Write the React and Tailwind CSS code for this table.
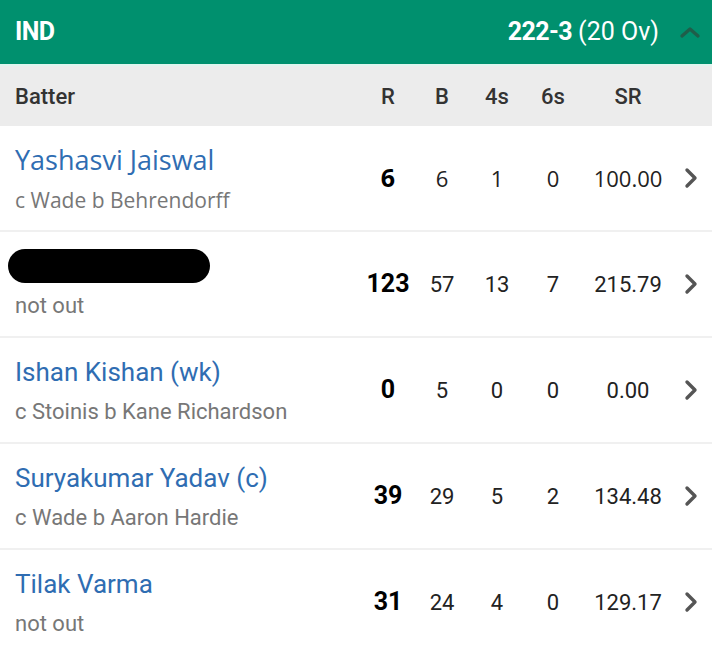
const batters = [
  { name: 'Yashasvi Jaiswal', out: 'c Wade b Behrendorff', r: 6, b: 6, fours: 1, sixes: 0, sr: '100.00', alt: true },
  { name: null, out: 'not out', r: 123, b: 57, fours: 13, sixes: 7, sr: '215.79' },
  { name: 'Ishan Kishan (wk)', out: 'c Stoinis b Kane Richardson', r: 0, b: 5, fours: 0, sixes: 0, sr: '0.00' },
  { name: 'Suryakumar Yadav (c)', out: 'c Wade b Aaron Hardie', r: 39, b: 29, fours: 5, sixes: 2, sr: '134.48' },
  { name: 'Tilak Varma', out: 'not out', r: 31, b: 24, fours: 4, sixes: 0, sr: '129.17' },
]

const Chevron = () => (
  <svg width="16" height="24" viewBox="0 0 16 24" fill="none">
    <path d="M4 4l8 8-8 8" stroke="#555" strokeWidth="3.4" strokeLinecap="round" strokeLinejoin="round" />
  </svg>
)

export default function App() {
  return (
    <div className="h-[652px] w-[712px] overflow-hidden bg-white font-['Roboto',sans-serif]">
      {/* team bar */}
      <div className="flex h-[64px] items-center bg-[#00906e] pl-[15px] text-white">
        <span className="flex-1 text-[25px] font-bold tracking-tight">IND</span>
        <span className="text-[25px]">
          <span className="font-bold tracking-tight">222-3</span> (20 Ov)
        </span>
        <div className="flex w-[53px] justify-center pl-[8px]">
          <svg width="22" height="14" viewBox="0 0 22 14" fill="none">
            <path d="M3 11l8-7 8 7" stroke="#1f5e4a" strokeWidth="3.4" strokeLinecap="round" strokeLinejoin="round" />
          </svg>
        </div>
      </div>
      <div className="h-[2px] bg-[#dff5ee]" />

      {/* column headings */}
      <div className="flex h-[60px] items-center bg-[#ececec] pl-[15px] text-[22px] font-medium text-[#333]">
        <span className="flex-1">Batter</span>
        <span className="w-[56px] text-center">R</span>
        <span className="w-[52px] text-center">B</span>
        <span className="w-[58px] text-center">4s</span>
        <span className="w-[54px] text-center">6s</span>
        <span className="w-[96px] text-center">SR</span>
        <span className="w-[36px]" />
      </div>

      {batters.map((p, i) => (
        <div key={i} className="flex h-[106px] shrink-0 items-center border-b-2 border-[#f0f0f0] pl-[15px]">
          <div className={`flex flex-1 flex-col ${p.alt ? "font-['Open_Sans',sans-serif]" : ''}`}>
            {p.name ? (
              <span className={`${p.alt ? 'text-[27px]' : 'text-[26px]'} leading-[34px] text-[#2f6db2]`}>{p.name}</span>
            ) : (
              <div className="-ml-[7px] h-[34px] w-[202px] rounded-full bg-black" />
            )}
            <span className={`mt-[9px] ${p.alt ? 'text-[21px]' : 'text-[22px]'} leading-[28px] text-[#777]`}>{p.out}</span>
          </div>
          <div className={`flex items-center text-[22px] text-[#222] ${p.alt ? "font-['Open_Sans',sans-serif]" : ''}`}>
            <span className="w-[56px] text-center text-[25px] font-bold text-black">{p.r}</span>
            <span className="w-[52px] text-center">{p.b}</span>
            <span className="w-[58px] text-center">{p.fours}</span>
            <span className="w-[54px] text-center">{p.sixes}</span>
            <span className="w-[96px] text-center">{p.sr}</span>
            <span className="flex w-[36px] justify-center pr-[6px]">
              <Chevron />
            </span>
          </div>
        </div>
      ))}
    </div>
  )
}
